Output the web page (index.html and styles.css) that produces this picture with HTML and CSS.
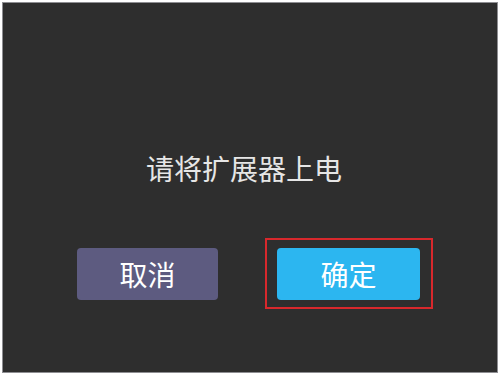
FILE: index.html
```html
<!DOCTYPE html>
<html lang="zh">
<head>
<meta charset="utf-8">
<link rel="stylesheet" href="styles.css">
</head>
<body>
<div class="screen">
  <div class="title">请将扩展器上电</div>
  <div class="actions">
    <button class="btn btn-cancel">取消</button>
    <div class="highlight">
      <button class="btn btn-ok">确定</button>
    </div>
  </div>
</div>
</body>
</html>
```
FILE: styles.css
```css
html, body {
  margin: 0;
  padding: 0;
  background: #ffffff;
}
body {
  padding: 2px 2px 2px 2px;
  width: 500px;
  height: 376px;
  box-sizing: border-box;
  font-family: "Noto Sans CJK SC", "Noto Sans", sans-serif;
}
.screen {
  box-sizing: border-box;
  width: 496px;
  height: 371px;
  border: 1px solid #8e8e92;
  background: #2e2e2e;
  display: flex;
  flex-direction: column;
}
.title {
  margin-top: 148px;
  padding-left: 143px;
  font-size: 28px;
  line-height: 34px;
  color: #e6e6e6;
}
.actions {
  margin-top: 53px;
  padding-left: 74px;
  display: flex;
  align-items: center;
  gap: 47px;
}
.btn {
  border: none;
  border-radius: 4px;
  height: 52px;
  font-family: "Noto Sans CJK SC", "Noto Sans", sans-serif;
  font-size: 28px;
  color: #ffffff;
  padding: 0;
  line-height: 52px;
}
.btn-cancel {
  width: 141px;
  background: #5d5b80;
}
.btn-ok {
  width: 143px;
  background: #2cb6f0;
  display: block;
}
.highlight {
  border: 2px solid #d8282c;
  padding: 8px 11px 7px 10px;
}
```
